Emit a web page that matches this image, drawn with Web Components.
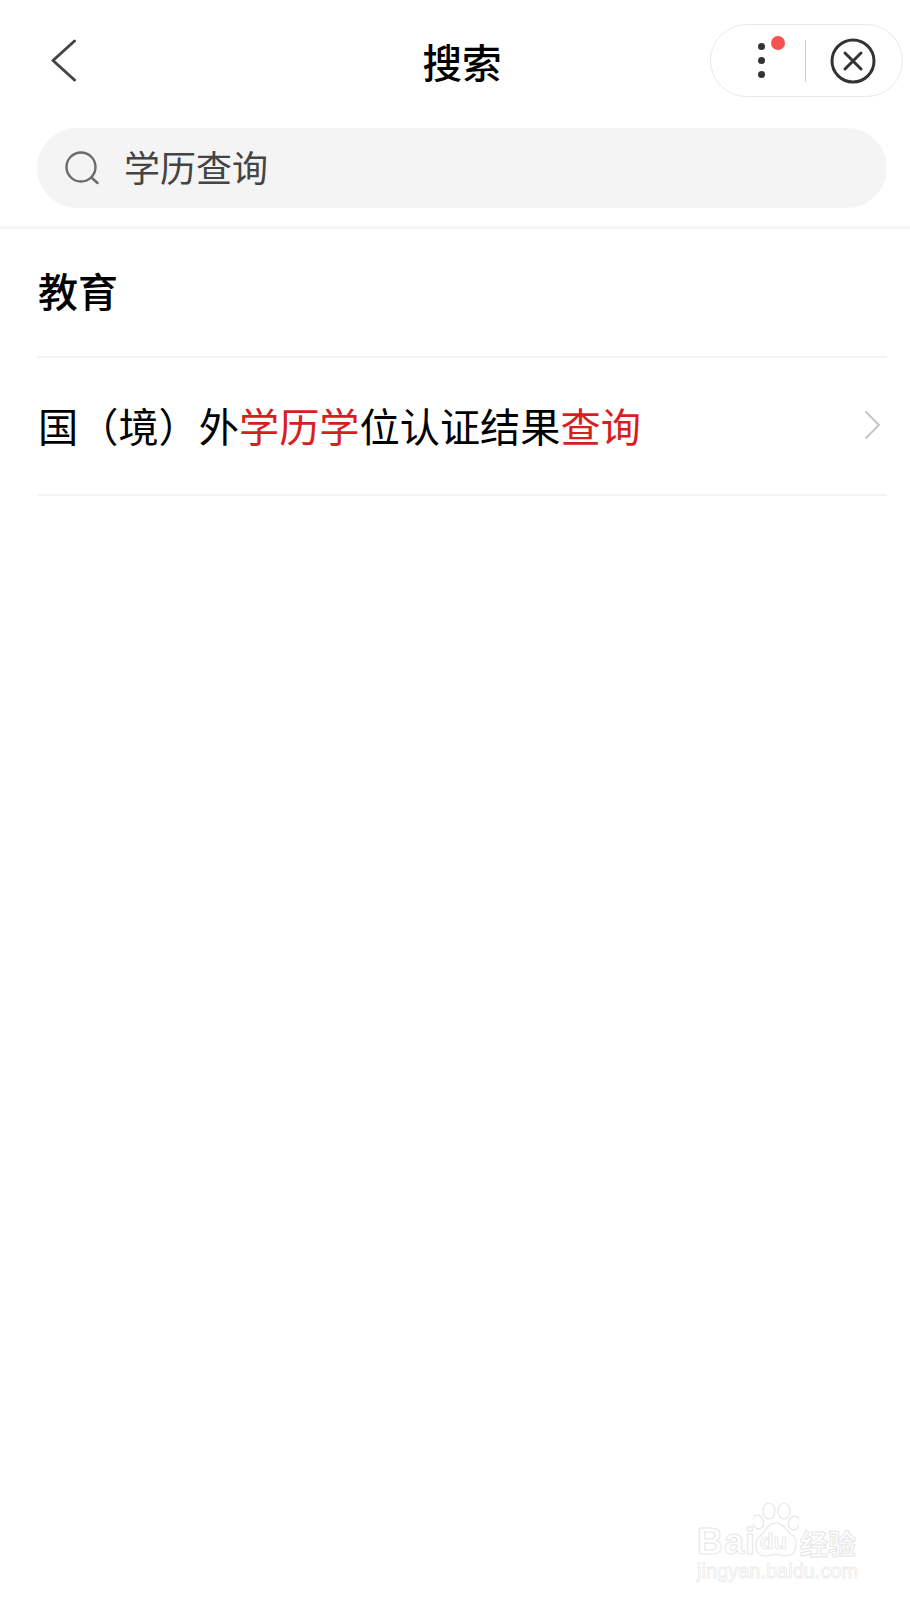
<!DOCTYPE html>
<html lang="zh">
<head>
<meta charset="utf-8">
<title>搜索</title>
<style>
  html, body {
    margin: 0;
    background: #fff;
    font-family: "Liberation Sans", "Noto Sans CJK SC", sans-serif;
  }
  body {
    position: relative;
    min-height: 1600px;
    overflow: hidden;
  }
</style>
</head>
<body>
  <app-header>
    <app-nav-bar title="搜索"></app-nav-bar>
    <app-search-box>学历查询</app-search-box>
  </app-header>
  <app-section-title>教育</app-section-title>
  <app-result-row>国（境）外<em>学历学</em>位认证结果<em>查询</em></app-result-row>
  <app-watermark></app-watermark>

<script>
class AppHeader extends HTMLElement {
  constructor() {
    super()
    this.attachShadow({ mode: 'open' })
    this.shadowRoot.innerHTML = `
      <style>
        :host {
          display: block;
          padding-bottom: 18px;
          border-bottom: 3px solid #f5f5f5;
        }
      </style>
      <slot></slot>
    `
  }
}

class AppNavBar extends HTMLElement {
  constructor() {
    super()
    this.attachShadow({ mode: 'open' })
    this.shadowRoot.innerHTML = `
      <style>
        :host {
          display: grid;
          grid-template-columns: 1fr auto 1fr;
          align-items: center;
          height: 73px;
          padding: 24px 7px 31px 0;
        }
        .back {
          display: block;
          margin-left: 50px;
          width: 28px;
          height: 44px;
        }
        h1 {
          margin: 0;
          padding-left: 21px;
          font-size: 39.5px;
          font-weight: 500;
          color: #000;
          font-family: "Noto Sans CJK SC", sans-serif;
        }
        .capsule {
          justify-self: end;
          display: flex;
          align-items: center;
          box-sizing: border-box;
          width: 193px;
          height: 73px;
          border: 1px solid #e8e8e8;
          border-radius: 37px;
          background: #fff;
        }
        .more {
          position: relative;
          display: flex;
          flex-direction: column;
          align-items: center;
          gap: 7px;
          width: 7px;
          margin-left: 47px;
        }
        .more i {
          display: block;
          width: 7px;
          height: 7px;
          border-radius: 50%;
          background: #333;
        }
        .more b {
          position: absolute;
          left: 13px;
          top: -7px;
          width: 14px;
          height: 14px;
          border-radius: 50%;
          background: #f55252;
        }
        .sep {
          width: 1px;
          height: 42px;
          margin-left: 40px;
          background: #cfcfcf;
        }
        .close {
          display: block;
          margin-left: 24px;
          width: 46px;
          height: 46px;
        }
      </style>
      <svg class="back" viewBox="0 0 28 44" fill="none" stroke="#444" stroke-width="3" stroke-linecap="round" stroke-linejoin="round">
        <path d="M24.5 2 L3 21.5 L24.5 41"/>
      </svg>
      <h1></h1>
      <div class="capsule">
        <div class="more"><i></i><i></i><i></i><b></b></div>
        <div class="sep"></div>
        <svg class="close" viewBox="0 0 46 46" fill="none" stroke="#333" stroke-linecap="round">
          <circle cx="23" cy="23" r="21" stroke-width="3"/>
          <path d="M15 15 L31 31 M31 15 L15 31" stroke-width="3"/>
        </svg>
      </div>
    `
    this.shadowRoot.querySelector('h1').textContent = this.getAttribute('title')
  }
}

class AppSearchBox extends HTMLElement {
  constructor() {
    super()
    this.attachShadow({ mode: 'open' })
    this.shadowRoot.innerHTML = `
      <style>
        :host {
          display: flex;
          align-items: center;
          box-sizing: border-box;
          height: 80px;
          margin: 0 23px 0 37px;
          padding-left: 28px;
          border-radius: 40px;
          background: #f4f4f4;
        }
        svg {
          display: block;
          flex: none;
          width: 34px;
          height: 34px;
          margin-right: 25px;
        }
        .text {
          margin-bottom: 4px;
          font-family: "Noto Sans CJK SC", sans-serif;
          font-size: 36px;
          color: #444;
        }
      </style>
      <svg viewBox="0 0 34 34" fill="none" stroke="#6b6b6b" stroke-width="2.4" stroke-linecap="round">
        <circle cx="16" cy="16" r="14.5"/>
        <path d="M27 27 L32.5 32"/>
      </svg>
      <span class="text"><slot></slot></span>
    `
  }
}

class AppSectionTitle extends HTMLElement {
  constructor() {
    super()
    this.attachShadow({ mode: 'open' })
    this.shadowRoot.innerHTML = `
      <style>
        :host {
          display: flex;
          align-items: center;
          box-sizing: border-box;
          height: 129px;
          margin: 0 23px 0 37px;
          padding: 0 0 6px 1px;
          border-bottom: 2px solid #f3f3f3;
          font-family: "Noto Sans CJK SC", sans-serif;
          font-size: 40px;
          font-weight: 500;
          color: #000;
        }
      </style>
      <slot></slot>
    `
  }
}

class AppResultRow extends HTMLElement {
  constructor() {
    super()
    this.attachShadow({ mode: 'open' })
    this.shadowRoot.innerHTML = `
      <style>
        :host {
          display: flex;
          align-items: center;
          justify-content: space-between;
          box-sizing: border-box;
          height: 138px;
          margin: 0 23px 0 37px;
          padding: 0 0 4px 1px;
          border-bottom: 2px solid #f3f3f3;
          font-family: "Noto Sans CJK SC", sans-serif;
          font-size: 40.2px;
          color: #000;
        }
        ::slotted(em) {
          font-style: normal;
          color: #d81e1e;
        }
        svg {
          display: block;
          width: 17px;
          height: 30px;
          margin: 2px 6px 0 0;
        }
      </style>
      <div><slot></slot></div>
      <svg viewBox="0 0 17 30" fill="none" stroke="#c8c8c8" stroke-width="2.2" stroke-linecap="round" stroke-linejoin="round">
        <path d="M2 2 L15 15 L2 28"/>
      </svg>
    `
  }
}

// sits over the page in the bottom corner, like the source image stamp
class AppWatermark extends HTMLElement {
  constructor() {
    super()
    this.attachShadow({ mode: 'open' })
    this.shadowRoot.innerHTML = `
      <style>
        :host {
          position: absolute;
          left: 697px;
          top: 1502px;
          display: block;
          width: 170px;
          color: #fff;
          -webkit-text-stroke: 1px #e6e6e6;
        }
        .top {
          display: flex;
          align-items: flex-end;
          height: 56px;
        }
        .bai {
          font: bold 36px/32px "Liberation Sans", sans-serif;
          letter-spacing: 1px;
          width: 56px;
        }
        .paw {
          position: relative;
          width: 46px;
          height: 56px;
          margin-right: 1px;
        }
        .paw svg {
          display: block;
          width: 46px;
          height: 56px;
        }
        .du {
          position: absolute;
          left: 7px;
          bottom: 6px;
          font: bold 22px/20px "Liberation Sans", sans-serif;
          -webkit-text-stroke: .7px #e0e0e0;
        }
        .cn {
          font: bold 28px/30px "Noto Sans CJK SC", sans-serif;
          white-space: nowrap;
        }
        .url {
          margin-top: 2px;
          font: 20px/22px "Liberation Sans", sans-serif;
          white-space: nowrap;
          -webkit-text-stroke: .8px #ececec;
        }
      </style>
      <div class="top">
        <span class="bai">Bai</span>
        <div class="paw">
          <svg viewBox="0 0 46 56" fill="#fff" stroke="#e6e6e6" stroke-width="1.2">
            <ellipse cx="5" cy="20" rx="5.5" ry="7" transform="rotate(-15 5 20)"/>
            <ellipse cx="16" cy="9" rx="6" ry="8"/>
            <ellipse cx="31" cy="9" rx="6" ry="8"/>
            <ellipse cx="41" cy="21" rx="5.5" ry="7" transform="rotate(15 41 21)"/>
            <path d="M23 21 C31 21 33 29 39 33 C46 38 44 54 33 54 C27 54 26 52 23 52 C20 52 18 54 12 54 C2 54 0 40 7 34 C13 29 15 21 23 21 Z"/>
          </svg>
          <span class="du">du</span>
        </div>
        <span class="cn">经验</span>
      </div>
      <div class="url">jingyan.baidu.com</div>
    `
  }
}

customElements.define('app-header', AppHeader)
customElements.define('app-nav-bar', AppNavBar)
customElements.define('app-search-box', AppSearchBox)
customElements.define('app-section-title', AppSectionTitle)
customElements.define('app-result-row', AppResultRow)
customElements.define('app-watermark', AppWatermark)
</script>
</body>
</html>
